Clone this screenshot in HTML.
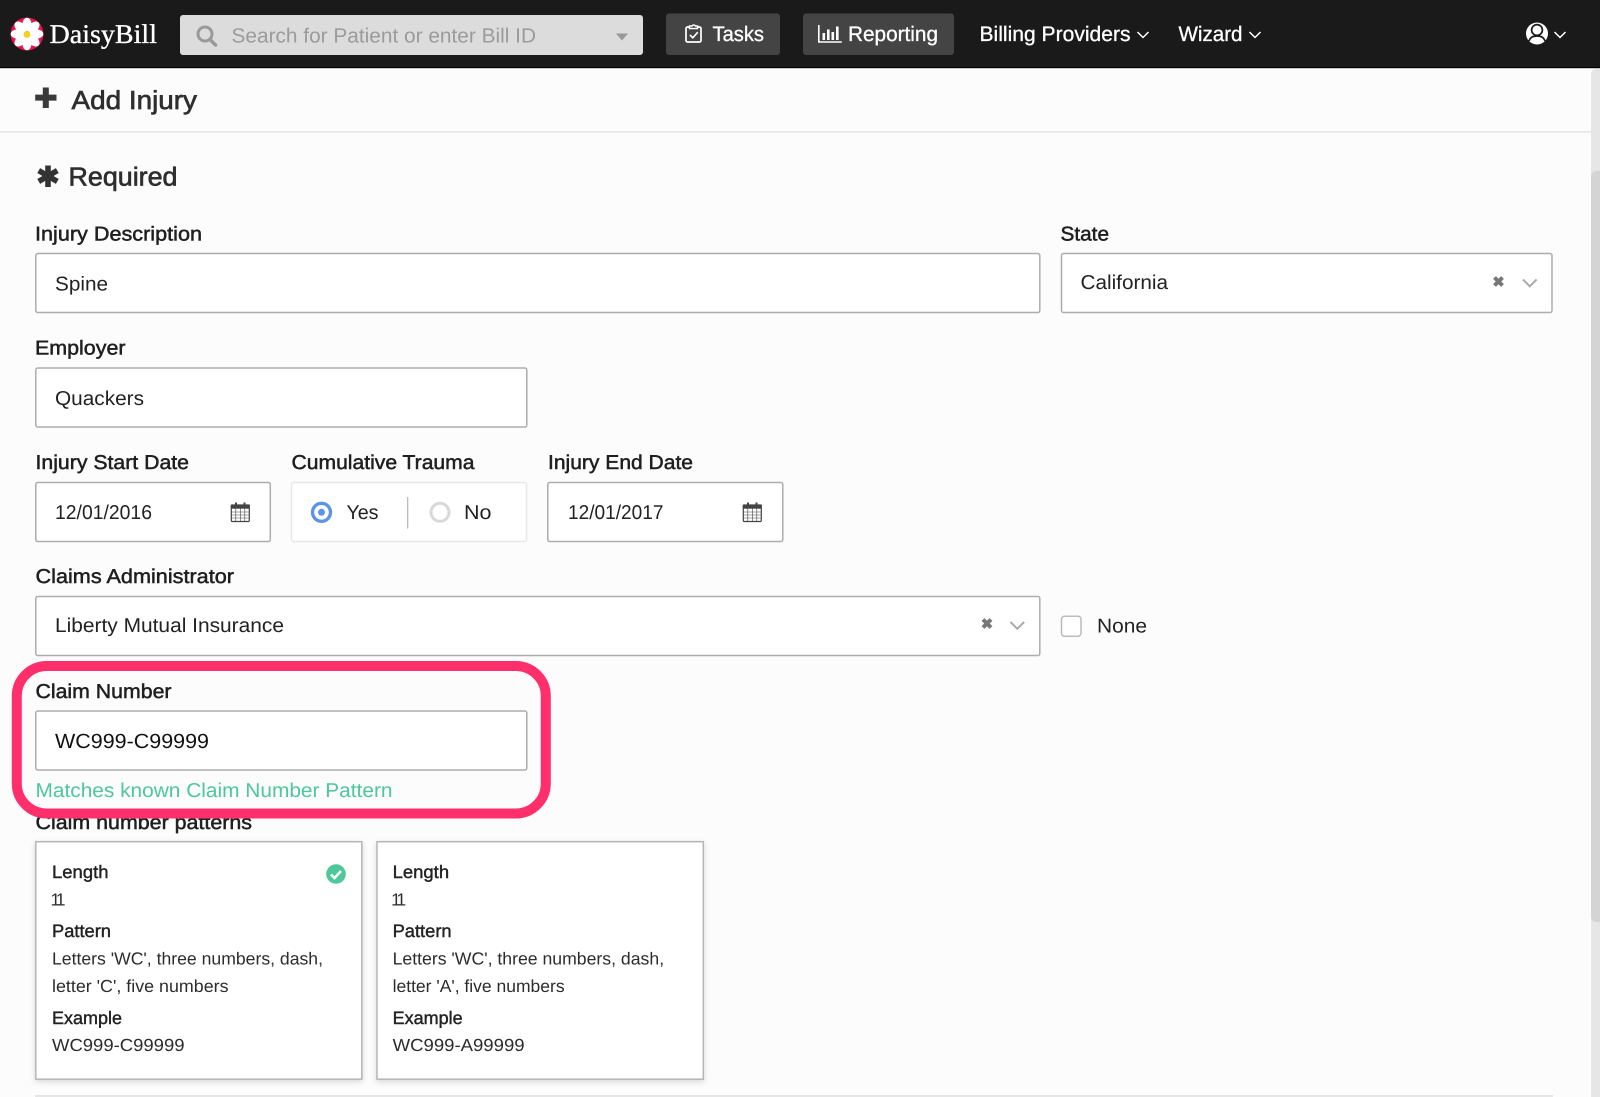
<!DOCTYPE html>
<html lang="en">
<head>
<meta charset="utf-8">
<title>DaisyBill - Add Injury</title>
<style>
html,body{margin:0;padding:0;width:1600px;height:1097px;overflow:hidden;background:#fcfcfc}
svg{display:block}
text{font-family:"Liberation Sans",Arial,sans-serif;text-rendering:geometricPrecision}
.nav{font-size:21px;fill:#fff;stroke:#fff;stroke-width:.3}
.h{font-size:26px;fill:#2e2e2e;stroke:#2e2e2e;stroke-width:.65}
.l{font-size:20px;fill:#1f1f1f;stroke:#1f1f1f;stroke-width:.5}
.v{font-size:20px;fill:#222}
.cl{font-size:18px;fill:#222;stroke:#222;stroke-width:.42}
.cv{font-size:17.5px;fill:#2c2c2c}
.i{fill:#fff;stroke:#adadad;stroke-width:1.5}
.card{fill:#fff;stroke:#b5b5b5;stroke-width:1.5;filter:drop-shadow(0 2px 3px rgba(0,0,0,.14))}
</style>
</head>
<body>
<svg xmlns="http://www.w3.org/2000/svg" width="1600" height="1097" viewBox="0 0 1600 1097">
<rect width="1600" height="1097" fill="#fcfcfc"/>

<!-- header -->
<rect width="1600" height="68" fill="#1a1a1a"/>
<rect y="67" width="1600" height="1.2" fill="#000"/>
<circle cx="27" cy="34" r="16.5" fill="#e2174f"/>
<g fill="#fff">
<ellipse cx="27" cy="24.5" rx="4.6" ry="6.8"/>
<ellipse cx="27" cy="24.5" rx="4.6" ry="6.8" transform="rotate(45 27 34)"/>
<ellipse cx="27" cy="24.5" rx="4.6" ry="6.8" transform="rotate(90 27 34)"/>
<ellipse cx="27" cy="24.5" rx="4.6" ry="6.8" transform="rotate(135 27 34)"/>
<ellipse cx="27" cy="24.5" rx="4.6" ry="6.8" transform="rotate(180 27 34)"/>
<ellipse cx="27" cy="24.5" rx="4.6" ry="6.8" transform="rotate(225 27 34)"/>
<ellipse cx="27" cy="24.5" rx="4.6" ry="6.8" transform="rotate(270 27 34)"/>
<ellipse cx="27" cy="24.5" rx="4.6" ry="6.8" transform="rotate(315 27 34)"/>
</g>
<circle cx="27" cy="34.5" r="3.4" fill="#f7d11e"/>
<text x="49.500" y="43" font-size="27" fill="#fff" stroke="#fff" stroke-width=".35" textLength="107.500" lengthAdjust="spacingAndGlyphs" style="font-family:'Liberation Serif',serif">DaisyBill</text>

<rect x="180" y="15" width="463" height="40" rx="3" fill="#dcdcdc"/>
<circle cx="205" cy="34" r="7" fill="none" stroke="#999" stroke-width="3"/>
<path d="M210 39.500l5.500 5.500" stroke="#999" stroke-width="3.400" stroke-linecap="round"/>
<text x="231.500" y="42.500" font-size="20.500" fill="#9b9b9b" textLength="304.500" lengthAdjust="spacingAndGlyphs">Search for Patient or enter Bill ID</text>
<path d="M616 33.500h12l-6 7z" fill="#999"/>

<rect x="666" y="13.500" width="114" height="41.500" rx="3" fill="#444"/>
<path d="M689 27h-1.500a1.500 1.500 0 0 0-1.500 1.500v12a1.500 1.500 0 0 0 1.500 1.500h12a1.500 1.500 0 0 0 1.500-1.500v-12a1.500 1.500 0 0 0-1.500-1.500H698" fill="none" stroke="#fff" stroke-width="1.700"/>
<path d="M689.500 28.500v-2.500h2.500a2 2 0 0 1 3.500 0h2v2.500z" fill="none" stroke="#fff" stroke-width="1.500"/>
<path d="M690 35l2.800 2.800 5-5.600" fill="none" stroke="#fff" stroke-width="1.600"/>
<text class="nav" x="712.500" y="41" textLength="51.500" lengthAdjust="spacingAndGlyphs">Tasks</text>

<rect x="803" y="13.500" width="151" height="41.500" rx="3" fill="#444"/>
<path d="M818.800 25v17h23" fill="none" stroke="#fff" stroke-width="1.600"/>
<g fill="#fff"><rect x="822.500" y="33" width="2.600" height="7"/><rect x="827" y="29.500" width="2.600" height="10.500"/><rect x="831.500" y="32" width="2.600" height="8"/><rect x="836" y="26.500" width="2.600" height="13.500"/></g>
<text class="nav" x="848" y="41" textLength="90" lengthAdjust="spacingAndGlyphs">Reporting</text>

<text class="nav" x="979.500" y="41" textLength="151" lengthAdjust="spacingAndGlyphs">Billing Providers</text>
<path d="M1137.500 32l5.500 5.500 5.500-5.500" fill="none" stroke="#fff" stroke-width="1.500"/>
<text class="nav" x="1178.500" y="41" textLength="64" lengthAdjust="spacingAndGlyphs">Wizard</text>
<path d="M1249.500 32l5.500 5.500 5.500-5.500" fill="none" stroke="#fff" stroke-width="1.500"/>

<circle cx="1537" cy="33.500" r="11" fill="#fff"/>
<circle cx="1537" cy="30" r="5.400" fill="#fff" stroke="#1a1a1a" stroke-width="1.700"/>
<path d="M1529 41c1.500-4 4-5 8-5s6.500 1 8 5" fill="none" stroke="#1a1a1a" stroke-width="1.700"/>
<path d="M1554.500 32l5.500 5.500 5.500-5.500" fill="none" stroke="#fff" stroke-width="1.500"/>

<!-- page title -->
<path d="M45.800 87.500v20.500M35.200 97.600h21.300" stroke="#3a3a3a" stroke-width="6" stroke-linejoin="round"/>
<text class="h" x="71.500" y="109" textLength="125.500" lengthAdjust="spacingAndGlyphs">Add Injury</text>
<rect y="131" width="1591" height="1.600" fill="#e6e6e6"/>

<path d="M48 165.500v21.500M38.700 170.600l18.600 10.800M38.700 181.400l18.600-10.800" stroke="#333" stroke-width="5.600"/>
<text class="h" x="68.500" y="185.500" textLength="109" lengthAdjust="spacingAndGlyphs">Required</text>

<!-- scrollbar -->
<path d="M1591 74a5 5 0 0 1 5-5h4v1028h-9z" fill="#e6e6e6"/>
<path d="M1591 176a5 5 0 0 1 5-5h4v751h-4a5 5 0 0 1-5-5z" fill="#d4d4d4"/>

<!-- row 1 -->
<text class="l" x="35" y="240.500" textLength="167" lengthAdjust="spacingAndGlyphs">Injury Description</text>
<rect class="i" x="35.800" y="253.500" width="1004" height="59" rx="2"/>
<text class="v" x="55" y="290.500" textLength="53" lengthAdjust="spacingAndGlyphs">Spine</text>
<text class="l" x="1060.500" y="240.500" textLength="48.500" lengthAdjust="spacingAndGlyphs">State</text>
<rect class="i" x="1061.500" y="253.500" width="490.500" height="59" rx="2"/>
<text class="v" x="1080.500" y="289" textLength="87.500" lengthAdjust="spacingAndGlyphs">California</text>
<path d="M1494.500 277.500l8 8M1502.500 277.500l-8 8" stroke="#777" stroke-width="4"/>
<path d="M1523 279.500l6.800 6.800 6.800-6.800" fill="none" stroke="#aaa" stroke-width="2"/>

<!-- employer -->
<text class="l" x="35" y="354.500" textLength="90.500" lengthAdjust="spacingAndGlyphs">Employer</text>
<rect class="i" x="35.800" y="368" width="491" height="59" rx="2"/>
<text class="v" x="55" y="405" textLength="89" lengthAdjust="spacingAndGlyphs">Quackers</text>

<!-- dates -->
<text class="l" x="35.500" y="469" textLength="153.500" lengthAdjust="spacingAndGlyphs">Injury Start Date</text>
<rect class="i" x="35.800" y="482.500" width="234.500" height="59" rx="2"/>
<text class="v" x="55" y="519" textLength="97" lengthAdjust="spacingAndGlyphs">12/01/2016</text>
<g fill="none" stroke="#444">
<rect x="231.300" y="505" width="18" height="16.500" stroke-width="1.200" rx="1"/>
<rect x="231.300" y="505" width="18" height="3.200" fill="#444" stroke-width="1"/>
<path d="M236 502.500v4.500M244.500 502.500v4.500" stroke-width="2"/>
<path d="M231.500 512h18M231.500 515h18M231.500 518h18M235.800 508v13M240.300 508v13M244.800 508v13" stroke-width=".6"/>
</g>
<text class="l" x="291.500" y="469" textLength="183" lengthAdjust="spacingAndGlyphs">Cumulative Trauma</text>
<rect x="291.500" y="482.500" width="235" height="59" rx="2" fill="#fff" stroke="#e8e8e8" stroke-width="1.500"/>
<circle cx="321.500" cy="512.300" r="9" fill="#fff" stroke="#5b93e6" stroke-width="3.300"/>
<circle cx="321.500" cy="512.300" r="3.500" fill="#5b93e6"/>
<text class="v" x="346.500" y="519" textLength="32" lengthAdjust="spacingAndGlyphs">Yes</text>
<rect x="407" y="497" width="1.300" height="31.500" fill="#bbb"/>
<circle cx="440" cy="512.300" r="9" fill="#fff" stroke="#d8d8d8" stroke-width="3"/>
<text class="v" x="464" y="519" textLength="27.500" lengthAdjust="spacingAndGlyphs">No</text>
<text class="l" x="548" y="469" textLength="145" lengthAdjust="spacingAndGlyphs">Injury End Date</text>
<rect class="i" x="547.800" y="482.500" width="235" height="59" rx="2"/>
<text class="v" x="568" y="519" textLength="95.500" lengthAdjust="spacingAndGlyphs">12/01/2017</text>
<g fill="none" stroke="#444" transform="translate(512 0)">
<rect x="231.300" y="505" width="18" height="16.500" stroke-width="1.200" rx="1"/>
<rect x="231.300" y="505" width="18" height="3.200" fill="#444" stroke-width="1"/>
<path d="M236 502.500v4.500M244.500 502.500v4.500" stroke-width="2"/>
<path d="M231.500 512h18M231.500 515h18M231.500 518h18M235.800 508v13M240.300 508v13M244.800 508v13" stroke-width=".6"/>
</g>

<!-- claims admin -->
<text class="l" x="35.500" y="583" textLength="198.500" lengthAdjust="spacingAndGlyphs">Claims Administrator</text>
<rect class="i" x="35.800" y="596.500" width="1004" height="59" rx="2"/>
<text class="v" x="55" y="632" textLength="229" lengthAdjust="spacingAndGlyphs">Liberty Mutual Insurance</text>
<path d="M983 619.500l8 8M991 619.500l-8 8" stroke="#777" stroke-width="4"/>
<path d="M1010.500 622l6.800 6.800 6.800-6.800" fill="none" stroke="#aaa" stroke-width="2"/>
<rect x="1061.500" y="616.200" width="19.500" height="20" rx="3" fill="#fff" stroke="#bbb" stroke-width="1.500"/>
<text class="v" x="1097" y="632.500" textLength="50" lengthAdjust="spacingAndGlyphs">None</text>

<!-- claim number -->
<text class="l" x="35.500" y="829" textLength="216.500" lengthAdjust="spacingAndGlyphs">Claim number patterns</text>
<text class="l" x="35.500" y="698" textLength="136" lengthAdjust="spacingAndGlyphs">Claim Number</text>
<rect class="i" x="35.800" y="711" width="491" height="59" rx="2"/>
<text class="v" x="55" y="748" textLength="154" lengthAdjust="spacingAndGlyphs" style="font-size:20.500px;fill:#111">WC999-C99999</text>
<text x="35.500" y="797" font-size="20" fill="#4dc79b" textLength="357" lengthAdjust="spacingAndGlyphs">Matches known Claim Number Pattern</text>
<rect x="16.800" y="666" width="529" height="147.500" rx="30" fill="none" stroke="#ff2f6b" stroke-width="10"/>

<!-- cards -->
<rect class="card" x="35.800" y="841.700" width="326" height="237.500"/>
<text class="cl" x="52" y="878" textLength="56.500" lengthAdjust="spacingAndGlyphs">Length</text>
<text class="cv" x="50.500" y="905.500" style="letter-spacing:-3.200px">11</text>
<text class="cl" x="52" y="937" textLength="59" lengthAdjust="spacingAndGlyphs">Pattern</text>
<text class="cv" x="52" y="964.500" textLength="271" lengthAdjust="spacingAndGlyphs">Letters 'WC', three numbers, dash,</text>
<text class="cv" x="52" y="992" textLength="176.500" lengthAdjust="spacingAndGlyphs">letter 'C', five numbers</text>
<text class="cl" x="52" y="1024" textLength="70" lengthAdjust="spacingAndGlyphs">Example</text>
<text class="cv" x="52" y="1051" textLength="132.500" lengthAdjust="spacingAndGlyphs">WC999-C99999</text>
<circle cx="336" cy="874" r="9.800" fill="#4dc79b"/>
<path d="M331 874.500l3.500 3.500 6.500-7" fill="none" stroke="#fff" stroke-width="2.600"/>

<rect class="card" x="377" y="841.700" width="326.300" height="237.500"/>
<text class="cl" x="392.600" y="878" textLength="56.500" lengthAdjust="spacingAndGlyphs">Length</text>
<text class="cv" x="391.100" y="905.500" style="letter-spacing:-3.200px">11</text>
<text class="cl" x="392.600" y="937" textLength="59" lengthAdjust="spacingAndGlyphs">Pattern</text>
<text class="cv" x="392.600" y="964.500" textLength="271.500" lengthAdjust="spacingAndGlyphs">Letters 'WC', three numbers, dash,</text>
<text class="cv" x="392.600" y="992" textLength="172" lengthAdjust="spacingAndGlyphs">letter 'A', five numbers</text>
<text class="cl" x="392.600" y="1024" textLength="70" lengthAdjust="spacingAndGlyphs">Example</text>
<text class="cv" x="392.600" y="1051" textLength="132" lengthAdjust="spacingAndGlyphs">WC999-A99999</text>

<rect x="35" y="1095" width="1518" height="2" fill="#e6e6e6"/>
</svg>
</body>
</html>
